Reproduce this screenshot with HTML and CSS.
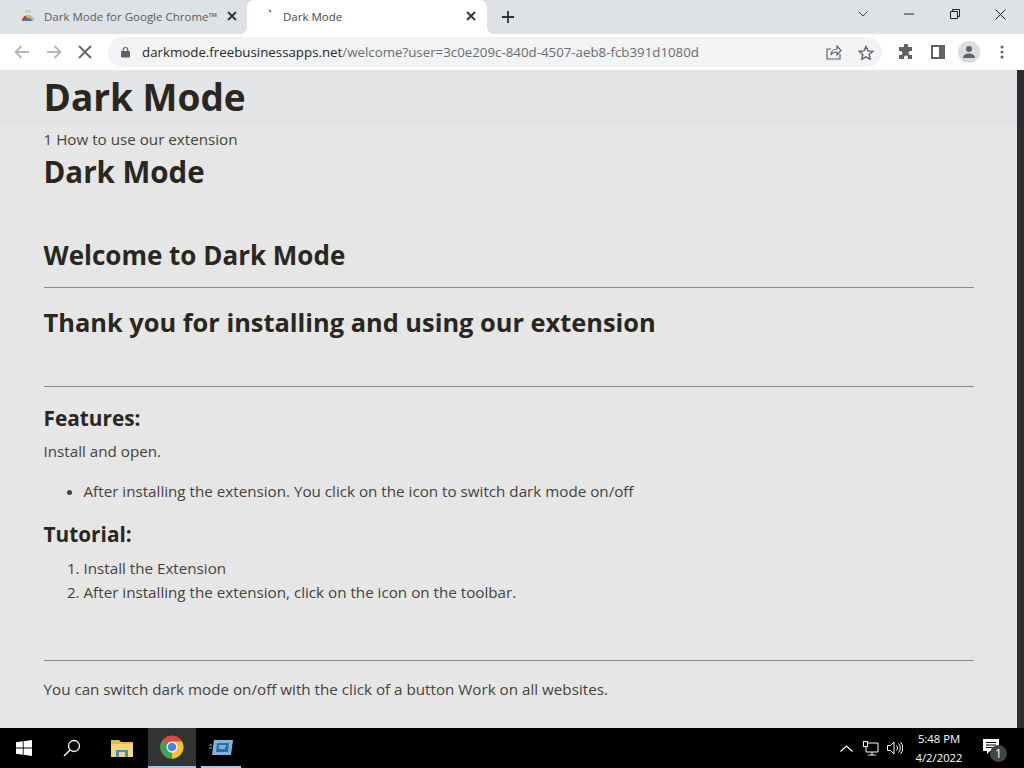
FILE: index.html
```html
<!DOCTYPE html>
<html lang="en">
<head>
    <meta charset="UTF-8">
    <title>Dark Mode</title>
    <link rel="stylesheet" href="styles.css">
</head>
<body>
    <div class="tabstrip">
        <div class="tab">
            <svg class="tab-icon" width="16" height="16" viewBox="0 0 16 16">
                <path d="M2 13a6 6 0 0 1 12 0z" fill="#c9b38a"/>
                <path d="M2 13a6 6 0 0 1 4-5.500L8 13z" fill="#d33b2c"/>
                <path d="M8 13l-2-5.500a6 6 0 0 1 6 1.500z" fill="#e8b92f"/>
                <path d="M4 13a4 3 0 0 1 8 0z" fill="#3d78c9"/>
                <rect x="5" y="2" width="6" height="3" fill="#c8cacd"/>
            </svg>
            <span class="tab-title">Dark Mode for Google Chrome™</span>
            <svg class="tab-close" width="10" height="10" viewBox="0 0 10 10"><path d="M1 1l8 8M9 1l-8 8" stroke="#303134" stroke-width="1.800"/></svg>
        </div>
        <div class="tab tab-active">
            <svg class="tab-icon" width="16" height="16" viewBox="0 0 16 16"><path d="M10 2l2 2" stroke="#5f6368" stroke-width="1.500"/></svg>
            <span class="tab-title">Dark Mode</span>
            <svg class="tab-close" width="10" height="10" viewBox="0 0 10 10"><path d="M1 1l8 8M9 1l-8 8" stroke="#303134" stroke-width="1.800"/></svg>
        </div>
        <svg class="new-tab" width="12" height="12" viewBox="0 0 12 12"><path d="M6 0v12M0 6h12" stroke="#303134" stroke-width="1.800"/></svg>
        <div class="window-controls">
            <svg width="10" height="6" viewBox="0 0 10 6"><path d="M0.500 0.500L5 5l4.500-4.500" fill="none" stroke="#444" stroke-width="1"/></svg>
            <svg class="win-min" width="10" height="2" viewBox="0 0 10 2"><path d="M0 1h10" stroke="#222" stroke-width="1"/></svg>
            <svg class="win-restore" width="10" height="10" viewBox="0 0 10 10"><path d="M0.500 2.500h7v7h-7zM2.500 2.500v-2h7v7h-2" fill="none" stroke="#222" stroke-width="1"/></svg>
            <svg class="win-close" width="11" height="11" viewBox="0 0 11 11"><path d="M0.500 0.500l10 10M10.500 0.500l-10 10" stroke="#222" stroke-width="1"/></svg>
        </div>
    </div>

    <div class="toolbar">
        <svg class="nav-icon" width="16" height="14" viewBox="0 0 16 14"><path d="M15 7H2M7.500 1L1.500 7l6 6" fill="none" stroke="#b4b6b9" stroke-width="1.800"/></svg>
        <svg class="nav-icon" width="16" height="14" viewBox="0 0 16 14"><path d="M1 7h13M8.500 1l6 6-6 6" fill="none" stroke="#b4b6b9" stroke-width="1.800"/></svg>
        <svg class="nav-icon" width="14" height="14" viewBox="0 0 14 14"><path d="M1 1l12 12M13 1L1 13" stroke="#5f6368" stroke-width="1.800"/></svg>
        <div class="omnibox">
            <svg class="lock" width="9" height="12" viewBox="0 0 10 12"><path d="M2.500 5V3.500a2.500 2.500 0 0 1 5 0V5" fill="none" stroke="#5f6368" stroke-width="1.300"/><rect y="5" width="10" height="7" rx="1" fill="#5f6368"/></svg>
            <span class="url"><span class="url-host">darkmode.freebusinessapps.net</span>/welcome?user=3c0e209c-840d-4507-aeb8-fcb391d1080d</span>
            <svg class="omni-share" width="16" height="15" viewBox="0 0 16 15"><path d="M14 9v5H1V4h4" fill="none" stroke="#5f6368" stroke-width="1.200"/><path d="M5 10c0-4 3-6 6-6V1l4 4.500L11 10V7c-3 0-5 1-6 3z" fill="none" stroke="#5f6368" stroke-width="1.200"/></svg>
            <svg class="omni-star" width="16" height="15" viewBox="0 0 16 15"><path d="M8 1.500l2 4.400 4.800.5-3.600 3.200 1 4.700L8 11.900l-4.200 2.400 1-4.700L1.200 6.400 6 5.900z" fill="none" stroke="#5f6368" stroke-width="1.400"/></svg>
        </div>
        <svg class="tool-icon" width="16" height="16" viewBox="0 0 16 16"><path d="M6 1.500a2 2 0 0 1 4 0V3h4v4h-1.500a2 2 0 0 0 0 4H14v4H10v-1.500a2 2 0 0 0-4 0V15H1v-4h1.500a2 2 0 0 0 0-4H1V3h5z" fill="#5f6368"/></svg>
        <svg class="tool-icon tool-panel" width="14" height="14" viewBox="0 0 14 14"><path d="M1 1h12v12H1z" fill="none" stroke="#5f6368" stroke-width="2"/><rect x="8" y="1" width="5" height="12" fill="#5f6368"/></svg>
        <div class="avatar">
            <svg width="14" height="14" viewBox="0 0 14 14"><circle cx="7" cy="4" r="3" fill="#5f6368"/><path d="M1 13c0-3 3-4.500 6-4.500s6 1.500 6 4.500z" fill="#5f6368"/></svg>
        </div>
        <svg class="tool-icon" width="4" height="14" viewBox="0 0 4 14"><circle cx="2" cy="2" r="1.500" fill="#5f6368"/><circle cx="2" cy="7" r="1.500" fill="#5f6368"/><circle cx="2" cy="12" r="1.500" fill="#5f6368"/></svg>
    </div>

    <div class="viewport">
        <div class="page">
            <header class="site-header"><div class="brand">Dark Mode</div></header>
            <main class="content">
                <div class="crumb">1 How to use our extension</div>
                <h1 class="page-title">Dark Mode</h1>
                <h2 class="welcome">Welcome to Dark Mode</h2>
                <hr>
                <h2 class="thanks">Thank you for installing and using our extension</h2>
                <hr class="rule-features">
                <h3>Features:</h3>
                <p>Install and open.</p>
                <ul>
                    <li>After installing the extension. You click on the icon to switch dark mode on/off</li>
                </ul>
                <h3>Tutorial:</h3>
                <ol>
                    <li>Install the Extension</li>
                    <li>After installing the extension, click on the icon on the toolbar.</li>
                </ol>
                <hr class="rule-footer">
                <p>You can switch dark mode on/off with the click of a button Work on all websites.</p>
            </main>
        </div>
        <div class="scrollbar"></div>
    </div>

    <div class="taskbar">
        <div class="task-btn task-start">
            <svg width="16" height="16" viewBox="0 0 16 16"><path d="M0 2.300l6.800-1v6.300H0zM7.600 1.200L16 0v7.600H7.600zM0 8.400h6.800v6.300l-6.800-1zM7.600 8.400H16V16l-8.400-1.200z" fill="#fff"/></svg>
        </div>
        <div class="task-btn">
            <svg width="18" height="18" viewBox="0 0 18 18"><circle cx="11" cy="7" r="5.500" fill="none" stroke="#fff" stroke-width="1.300"/><path d="M7 11l-6 6" stroke="#fff" stroke-width="1.500"/></svg>
        </div>
        <div class="task-btn">
            <svg width="22" height="18" viewBox="0 0 22 18"><path d="M0 1h8l2 2h12v15H0z" fill="#e8b84a"/><rect y="5" width="22" height="13" fill="#f5d67c"/><rect x="5" y="11" width="12" height="7" fill="#4a8ec9"/><rect x="8" y="13" width="6" height="5" fill="#f5d67c"/></svg>
        </div>
        <div class="task-btn task-open task-active">
            <svg width="24" height="24" viewBox="0 0 24 24"><circle cx="12" cy="12" r="11.500" fill="#dd4b3e"/><path d="M12 12L2 18A11.500 11.500 0 0 1 2 6z" fill="#3aa757"/><path d="M12 12l-10 6a11.500 11.500 0 0 0 10 5.500A11.500 11.500 0 0 0 23.500 12z" fill="#3aa757"/><path d="M12 6.500h10A11.500 11.500 0 0 1 12 23.500z" fill="#f2c230"/><circle cx="12" cy="12" r="5.500" fill="#fff"/><circle cx="12" cy="12" r="4.300" fill="#4a86e0"/></svg>
        </div>
        <div class="task-btn task-open task-last">
            <svg width="24" height="16" viewBox="0 0 24 16"><path d="M5 1h19l-2 15H3z" fill="#7fb4dc"/><path d="M8 4h12l-1 9H7z" fill="#2f6ea5"/><path d="M10 7h7M10 9h6" stroke="#dcecf8" stroke-width="1"/><path d="M0 6h3M0 9h3" stroke="#7fb4dc" stroke-width="1"/></svg>
        </div>
        <div class="tray">
            <svg width="13" height="7" viewBox="0 0 13 7"><path d="M0.500 6.500l6-5.500 6 5.500" fill="none" stroke="#fff" stroke-width="1.200"/></svg>
            <svg class="tray-net" width="16" height="15" viewBox="0 0 16 15"><path d="M3 2h12v9H3zM9 11v3M5 14h8" fill="none" stroke="#fff" stroke-width="1"/><rect x="0.500" y="0.500" width="4" height="5" fill="#000" stroke="#fff"/></svg>
            <svg width="16" height="14" viewBox="0 0 16 14"><path d="M0.500 4.500h3l3.500-3.500v12l-3.500-3.500h-3z" fill="none" stroke="#fff"/><path d="M9.500 4.500a3.500 3.500 0 0 1 0 5M11.500 2.500a6.500 6.500 0 0 1 0 9M13.500 1a9 9 0 0 1 0 12" fill="none" stroke="#fff"/></svg>
            <div class="clock"><span>5:48 PM</span><span>4/2/2022</span></div>
            <div class="notify">
                <svg width="16" height="15" viewBox="0 0 16 15"><path d="M0 0h16v12H7l-3 3v-3H0z" fill="#fff"/><path d="M3 3.500h10M3 6h10M3 8.500h7" stroke="#000" stroke-width="1"/></svg>
                <span class="notify-badge">1</span>
            </div>
        </div>
    </div>
</body>
</html>
```

FILE: styles.css
```css
html, body {
    margin: 0;
    height: 768px;
    overflow: hidden;
}
body {
    font-family: "Open Sans", "Noto Sans", sans-serif;
    display: flex;
    flex-direction: column;
    background: #000;
}

.tabstrip {
    height: 34px;
    background: #dee1e6;
    display: flex;
    align-items: center;
    padding-left: 8px;
}
.tab {
    width: 239px;
    height: 34px;
    display: flex;
    align-items: center;
    padding: 0 10px 2px 12px;
    box-sizing: border-box;
    font-size: 11.5px;
    color: #5a5d61;
}
.tab-active {
    width: 240px;
    padding-right: 11px;
    position: relative;
    background: #fff;
    color: #45474a;
    border-radius: 8px 8px 0 0;
}
.tab-active::before,
.tab-active::after {
    content: "";
    position: absolute;
    bottom: 0;
    width: 8px;
    height: 8px;
}
.tab-active::before {
    left: -8px;
    background: radial-gradient(circle at 0 0, #dee1e6 8px, #fff 8.500px);
}
.tab-active::after {
    right: -8px;
    background: radial-gradient(circle at 100% 0, #dee1e6 8px, #fff 8.500px);
}
.tab-icon {
    flex: none;
    margin-right: 8px;
}
.tab-title {
    flex: 1;
    white-space: nowrap;
    overflow: hidden;
}
.tab-close {
    flex: none;
    margin-left: 8px;
}
.new-tab {
    margin-left: 15px;
}
.window-controls {
    margin-left: auto;
    display: flex;
    align-items: center;
    height: 28px;
    align-self: flex-start;
    padding-right: 18px;
}
.win-min {
    margin-left: 36px;
}
.win-restore {
    margin-left: 36px;
}
.win-close {
    margin-left: 35px;
}

.toolbar {
    height: 36px;
    background: #fff;
    display: flex;
    align-items: center;
    padding-left: 14px;
    box-sizing: border-box;
}
.nav-icon {
    flex: none;
    margin-right: 16px;
}
.omnibox {
    width: 774px;
    height: 30px;
    margin-right: 16px;
    background: #f1f3f4;
    border-radius: 15px;
    display: flex;
    align-items: center;
    padding: 0 8px 0 13px;
    box-sizing: border-box;
    font-size: 13.3px;
    color: #6a6d70;
}
.lock {
    flex: none;
    margin-right: 12px;
}
.url {
    flex: 1;
    white-space: nowrap;
}
.url-host {
    color: #25272a;
}
.omni-share {
    margin-right: 16px;
}
.tool-icon {
    flex: none;
    margin-right: 17px;
}
.tool-panel {
    margin-right: 13px;
}
.avatar {
    flex: none;
    width: 22px;
    height: 22px;
    background: #dadce0;
    border-radius: 50%;
    display: flex;
    align-items: center;
    justify-content: center;
    margin-right: 20px;
}

.viewport {
    height: 658px;
    display: flex;
}
.page {
    flex: 1;
    background: #e6e6e6;
    color: #45423b;
    overflow: hidden;
}
.scrollbar {
    width: 7px;
    background: #2b2c30;
}
.site-header {
    height: 57px;
    background: #e3e4e6;
    border-bottom: 1px solid #eaeaeb;
    padding: 0 43.500px;
}
.brand {
    font-size: 37px;
    font-weight: 700;
    line-height: 54px;
    color: #2a271f;
}
.content {
    padding: 0 43px 0 43.500px;
}
.crumb {
    font-size: 15.200px;
    line-height: 22px;
}
.page-title {
    font-size: 29.500px;
    font-weight: 700;
    line-height: 40px;
    margin: 2px 0 45px;
    color: #2a271f;
}
.welcome {
    font-size: 26px;
    font-weight: 700;
    line-height: 36px;
    margin: 0 0 14px;
    color: #2a271f;
}
.thanks {
    font-size: 25.400px;
    font-weight: 700;
    line-height: 36px;
    margin: 0 0 46px;
    color: #2a271f;
}
hr {
    border: 0;
    border-top: 1px solid #8a8a8a;
    margin: 0 0 16px;
}
.rule-features {
    margin-bottom: 15px;
}
.rule-footer {
    margin: 56px 0 16px;
}
h3 {
    font-size: 20.800px;
    font-weight: 700;
    line-height: 32px;
    margin: 0;
    color: #2a271f;
}
p {
    font-size: 15.200px;
    line-height: 24px;
    margin: 5px 0 16px;
}
ul, ol {
    font-size: 15.200px;
    line-height: 24px;
    margin: 0 0 15px;
    padding-left: 40px;
}
ol {
    margin-top: 6px;
}

.taskbar {
    height: 40px;
    background: #000;
    display: flex;
    align-items: stretch;
}
.task-btn {
    width: 48px;
    margin-right: 2px;
    display: flex;
    align-items: center;
    justify-content: center;
    box-sizing: border-box;
}
.task-start {
    margin-right: 0;
}
.task-open {
    border-bottom: 2px solid #9fcbe8;
}
.task-active {
    background: #333;
    margin-right: 5px;
}
.task-last {
    width: 40px;
}
.tray {
    margin-left: auto;
    display: flex;
    align-items: center;
    color: #fff;
    font-size: 11.300px;
    gap: 8px;
}
.tray-net {
    margin-left: 2px;
}
.clock {
    display: flex;
    flex-direction: column;
    align-items: center;
    line-height: 19px;
    width: 56px;
}
.notify {
    position: relative;
    width: 49px;
    padding-left: 8px;
    box-sizing: border-box;
}
.notify-badge {
    position: absolute;
    left: 15px;
    top: 6px;
    width: 17px;
    height: 17px;
    line-height: 17px;
    text-align: center;
    border-radius: 50%;
    background: #444;
    font-size: 12px;
}
```
